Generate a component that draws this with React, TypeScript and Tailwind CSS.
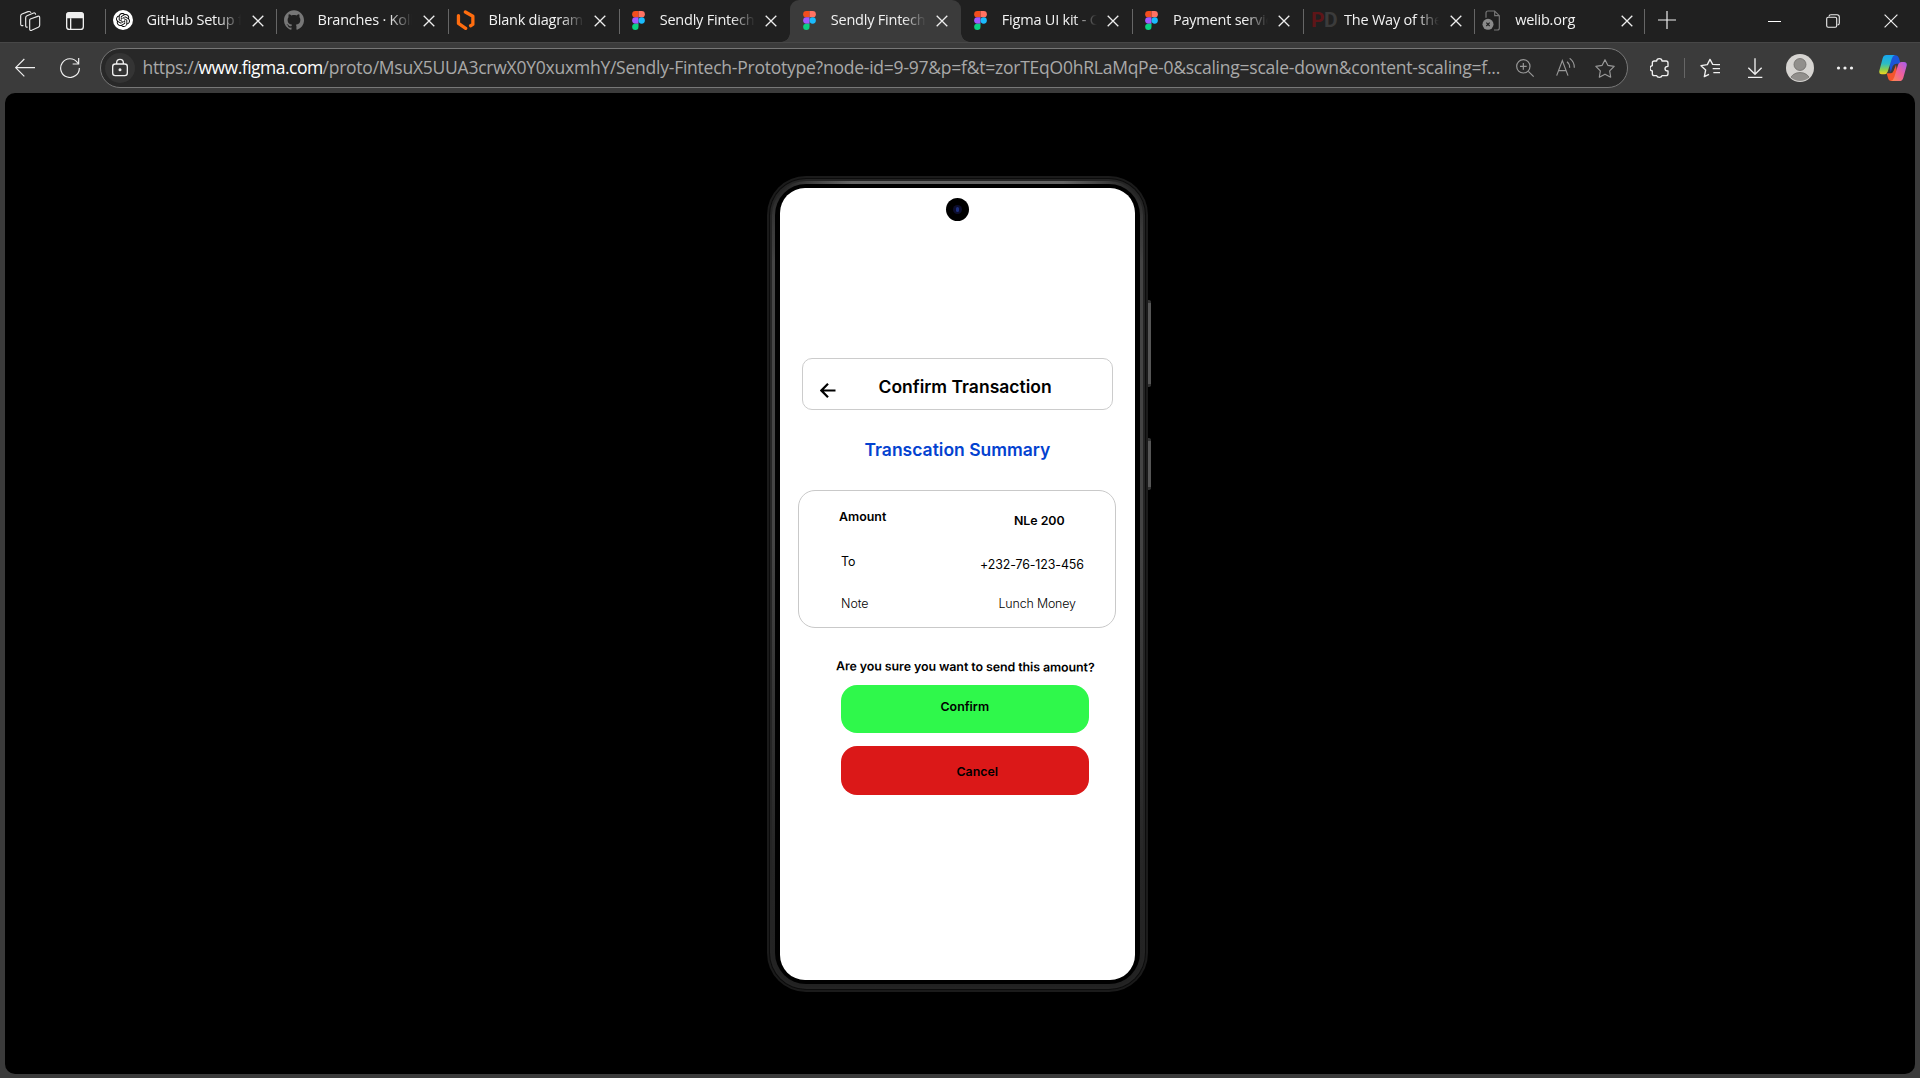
import type { ReactNode } from "react";
import { SiOpenai, SiGithub } from "react-icons/si";

const FigmaIcon = () => (
  <svg className="h-[19px] w-[13px]" viewBox="0 0 38 57">
    <path fill="#f24e1e" d="M19 0H9.5a9.5 9.5 0 0 0 0 19H19z" />
    <path fill="#ff7262" d="M19 0h9.500a9.500 9.500 0 0 1 0 19H19z" />
    <path fill="#a259ff" d="M19 19H9.500a9.500 9.500 0 0 0 0 19H19z" />
    <circle fill="#1abcfe" cx="28.500" cy="28.500" r="9.500" />
    <path fill="#0acf83" d="M19 38H9.500a9.500 9.500 0 1 0 9.500 9.500z" />
  </svg>
);

const ChatIcon = () => (
  <span className="flex size-5 items-center justify-center rounded-full bg-white">
    <SiOpenai className="size-[14px] text-black" />
  </span>
);

const LucidIcon = () => (
  <svg className="h-5 w-[19px]" viewBox="49 29 57 61" fill="none" stroke="#ff6d0f" strokeWidth="10" strokeLinejoin="round" strokeLinecap="round">
    <path d="M56 46v24l22 15" />
    <path d="M77 35l23 13v25l-7 4" />
  </svg>
);

const BrokenPageIcon = () => (
  <svg className="h-[21px] w-[19px]" viewBox="188 29 57 63" fill="none">
    <path d="M200 52V38q0-6 6-6h20l14 14v37q0 6-6 6h-10M226 32v14h14" stroke="#777" strokeWidth="3.500" />
    <circle cx="206" cy="72" r="16.500" fill="#8a8a8a" />
    <path d="M201 67l10 10M211 67l-10 10" stroke="#202020" strokeWidth="3.500" />
  </svg>
);

const PdIcon = () => (
  <span className="block text-[21px] leading-5 font-bold tracking-[-0.500px] font-['Roboto',sans-serif]">
    <span className="text-[#5e1518]">P</span>
    <span className="text-[#3b3b3b]">D</span>
  </span>
);

type TabInfo = { icon: ReactNode; title: string; active?: boolean; line?: boolean };

const tabs: TabInfo[] = [
  { icon: <ChatIcon />, title: "GitHub Setup f", line: true },
  { icon: <SiGithub className="size-5 text-[#777]" />, title: "Branches · Koll", line: true },
  { icon: <LucidIcon />, title: "Blank diagram:", line: true },
  { icon: <FigmaIcon />, title: "Sendly Fintech", line: true },
  { icon: <FigmaIcon />, title: "Sendly Fintech", active: true },
  { icon: <FigmaIcon />, title: "Figma UI kit - C" },
  { icon: <FigmaIcon />, title: "Payment servic", line: true },
  { icon: <PdIcon />, title: "The Way of the", line: true },
  { icon: <BrokenPageIcon />, title: "welib.org", line: true },
];

const Cross = () => (
  <svg className="size-[12px]" viewBox="0 0 12 12" stroke="#eee" strokeWidth="1.300">
    <path d="M.7.7l10.600 10.600M11.300.7L.7 11.300" />
  </svg>
);

function Tab({ icon, title, active, line }: TabInfo) {
  return (
    <div
      className={
        "relative flex h-[42px] w-[171.100px] shrink-0 items-center " + (active ? "rounded-t-[9px] bg-[#3b3b3b]" : "")
      }
    >
      {line && <span className="absolute top-[9px] left-0 h-[25px] w-px bg-[#666]" />}
      {active && (
        <>
          <span className="absolute bottom-0 -left-[9px] size-[9px] bg-[radial-gradient(circle_at_0_0,transparent_8.500px,#3b3b3b_9px)]" />
          <span className="absolute -right-[9px] bottom-0 size-[9px] bg-[radial-gradient(circle_at_100%_0,transparent_8.500px,#3b3b3b_9px)]" />
        </>
      )}
      <span className="ml-2 flex w-[21px] justify-start pb-[2px] empty:hidden">
        <span className={title.includes("Fintech") || title.includes("Figma") || title.includes("Payment") ? "pl-[5px]" : ""}>{icon}</span>
      </span>
      <span className="ml-3 w-[97px] overflow-hidden pb-[3px] text-[14.500px] tracking-[-0.220px] whitespace-nowrap text-[#f2f2f2] [mask-image:linear-gradient(to_right,black_74%,transparent_98%)]">
        {title}
      </span>
      <span className="ml-[8.500px] pb-[1px]">
        <Cross />
      </span>
    </div>
  );
}

function TabStrip() {
  return (
    <header className="flex h-[42px] items-center bg-[#202020]">
      <svg className="ml-[19px] h-[22px] w-[22px]" viewBox="57 27 66 66" fill="none" stroke="#e8e8e8" strokeWidth="3.500" strokeLinejoin="round">
        <path d="M91 52l22-8q6-2 6 4v23q0 4-4 6l-20 9q-6 2-6-4V57q0-4 2-5z" transform="translate(0 2)" />
        <path d="M83 78q-6 2-6-4V50q0-4 4-6l20-8q5-2 6 5" />
        <path d="M70 73q-8 3-8-4V45q0-4 4-6l18-7q7-2 9 3" />
      </svg>
      <svg className="ml-[24px] size-[20px]" viewBox="195 30 60 60" fill="none">
        <rect x="200" y="35" width="50" height="50" rx="8" stroke="#eee" strokeWidth="4" />
        <path d="M199 52V42q0-8 8-8h36q8 0 8 8v10z" fill="#eee" />
        <path d="M212 52v32" stroke="#eee" strokeWidth="4" />
      </svg>
      <nav className="ml-[20.400px] flex">
        {tabs.map((t, i) => (
          <Tab key={i} {...t} />
        ))}
      </nav>
      <div className="-ml-px flex h-[25px] w-px bg-[#666]" />
      <svg className="ml-[13px] size-[18px] -translate-y-[1px]" viewBox="0 0 18 18" stroke="#eee" strokeWidth="1.200">
        <path d="M9 0v18M0 9h18" />
      </svg>
      <div className="mr-[22px] ml-auto flex items-center">
        <div className="h-px w-[13px] bg-white" />
        <svg className="ml-[45px] size-[14px]" viewBox="0 0 14 14" fill="none" stroke="#eee" strokeWidth="1.100">
          <rect x=".7" y="3.200" width="10" height="10" rx="1.500" />
          <path d="M3 2.500Q3 .7 5 .7h6q2.300 0 2.300 2.300v6q0 2-1.800 2" />
        </svg>
        <svg className="ml-[44px] size-[14px]" viewBox="0 0 14 14" stroke="#eee" strokeWidth="1.200">
          <path d="M.6.6l12.800 12.800M13.400.6L.6 13.400" />
        </svg>
      </div>
    </header>
  );
}

const star = "M555 179l8.500 17 19 3-13.500 13.500 3 19-17-9-17 9 3-19L527.500 199l19-3z";

function Toolbar() {
  return (
    <div className="flex h-[51px] items-center border-t border-[#474747] bg-[#3b3b3b]">
      <svg className="ml-[15px] size-5" viewBox="45 174 60 60" fill="none" stroke="#f0f0f0" strokeWidth="3.500">
        <path d="M105 203H48M73 177l-26 26 26 26" />
      </svg>
      <svg className="ml-[25px] size-5" viewBox="180 174 60 60" fill="none" stroke="#f0f0f0" strokeWidth="3.500">
        <path d="M238 204a28 28 0 1 1-6-17l4 4M236 174v18h-18" />
      </svg>
      <div className="ml-5 flex h-[40px] w-[1528px] items-center rounded-full border border-[#777] bg-[#282828]">
        <span className="ml-1 flex size-[30px] items-center justify-center rounded-full bg-[#343434]">
          <svg className="size-5" viewBox="330 174 60 60" fill="none" stroke="#f0f0f0" strokeWidth="4">
            <rect x="338" y="192" width="44" height="35" rx="8" />
            <path d="M350 192v-4q0-10 10-10t10 10v4" />
            <circle cx="360" cy="209" r="2.500" fill="#f0f0f0" />
          </svg>
        </span>
        <span className="ml-[7.500px] flex w-[1362px] pb-px text-[17.500px] whitespace-nowrap text-[#a9a9a9]">
          <span className="w-[56px] tracking-[-0.350px]">https://</span>
          <span className="w-[124px] tracking-[-0.500px] text-white">www.figma.com</span>
          <span className="tracking-[-0.236px]">
            /proto/MsuX5UUA3crwX0Y0xuxmhY/Sendly-Fintech-Prototype?node-id=9-97&amp;p=f&amp;t=zorTEqO0hRLaMqPe-0&amp;scaling=scale-down&amp;content-scaling=f...
          </span>
        </span>
        <div className="mr-3 ml-auto flex gap-5">
          <svg className="size-5" viewBox="285 174 60 60" fill="none" stroke="#999" strokeWidth="3.500">
            <circle cx="310" cy="199" r="20" />
            <path d="M325 214l16 16M310 189v20M300 199h20" />
          </svg>
          <svg className="size-5" viewBox="405 174 60 60" fill="none" stroke="#999" strokeWidth="3.500">
            <path d="M410 227l17-45 17 45M416 212h22M441 185q8 6 8 18M449 175q14 10 14 28" />
          </svg>
          <svg className="size-5" viewBox="525 174 60 60" fill="none" stroke="#999" strokeWidth="3.500" strokeLinejoin="round">
            <path d={star} />
          </svg>
        </div>
      </div>
      <svg className="ml-[22px] size-5" viewBox="690 174 60 60" fill="none" stroke="#f0f0f0" strokeWidth="4" strokeLinejoin="round">
        <path d="M703 183h7q0-7 8-7t8 7h12q6 0 6 6v10q-9 0-9 7t9 7v8q0 6-6 6h-12q-1 5-8 5t-8-5h-7q-6 0-6-6v-8q-7-1-7-8t7-8v-8q0-6 6-6z" />
      </svg>
      <div className="ml-[14px] h-5 w-px bg-[#666]" />
      <svg className="ml-[15px] size-5" viewBox="840 174 60 60" fill="none" stroke="#f0f0f0" strokeWidth="4" strokeLinejoin="round">
        <path d="M891 194l-13-1-8-15-8 16-19 3 14 13-4 20 14-7M878 194h23M878 206h23M880 218h21" />
      </svg>
      <svg className="ml-[25px] size-5" viewBox="975 174 60 60" fill="none" stroke="#f0f0f0" strokeWidth="4">
        <path d="M1005 175v46M985 203l20 20 20-20M984 232h43" />
      </svg>
      <svg className="ml-[21px] size-7" viewBox="0 0 28 28">
        <defs>
          <clipPath id="avatar">
            <circle cx="14" cy="14" r="13" />
          </clipPath>
        </defs>
        <circle cx="14" cy="14" r="14" fill="#d6d4d1" />
        <g clipPath="url(#avatar)" fill="#918f8c" stroke="#6f6d6b" strokeWidth=".8">
          <circle cx="14" cy="10.500" r="6" />
          <ellipse cx="14" cy="25.500" rx="9.500" ry="7" />
        </g>
      </svg>
      <svg className="ml-[21px] h-5 w-5" viewBox="0 0 20 20" fill="#f0f0f0">
        <circle cx="3.500" cy="10" r="1.600" />
        <circle cx="10" cy="10" r="1.600" />
        <circle cx="16.500" cy="10" r="1.600" />
      </svg>
      <svg className="ml-[24px] size-7" viewBox="1377 162 84 84">
        <defs>
          <linearGradient id="cl" x1="0" y1="0" x2="0" y2="1">
            <stop offset="0" stopColor="#17a5f0" />
            <stop offset=".45" stopColor="#2bbcc4" />
            <stop offset=".75" stopColor="#8ccf4c" />
            <stop offset="1" stopColor="#f5d51e" />
          </linearGradient>
          <linearGradient id="cr" x1="1" y1="0" x2="0" y2="1">
            <stop offset="0" stopColor="#a45cf0" />
            <stop offset=".5" stopColor="#f0609a" />
            <stop offset="1" stopColor="#ff8a4a" />
          </linearGradient>
        </defs>
        <path fill="#1b55d8" d="M1404 166h22q8 0 11 9l5 16h-13q-8 0-11 8l-6 18z" />
        <path fill="#f4552c" d="M1434 243h-20q-8 0-10-9l-4-14h11q7 0 10-8l7-18z" />
        <path fill="url(#cl)" d="M1399 165h26q-7 2-10 12l-12 38q-3 8-10 8h-8q-9 0-7-11l10-37q3-10 11-10z" />
        <path fill="url(#cr)" d="M1439 243h-26q7-2 10-12l11-36q3-9 11-9h7q10 0 8 11l-10 36q-3 10-11 10z" />
      </svg>
    </div>
  );
}

function Phone() {
  return (
    <div className="relative mt-[83px] ml-[762px] h-[816px] w-[381px] rounded-[39px] bg-[#1b1b1b] p-[2px]">
      <div className="absolute top-[124px] -right-[3px] h-[87px] w-[3px] rounded-r-[2px] border-y-[3px] border-[#333] bg-[#565656]" />
      <div className="absolute top-[262px] -right-[3px] h-[52px] w-[3px] rounded-r-[2px] border-y-[3px] border-[#333] bg-[#565656]" />
      <div className="h-full rounded-[37px] bg-[#0c0c0c] p-px">
        <div className="h-full rounded-[36px] bg-[#242424] p-[2px]">
          <div className="h-full rounded-[34px] bg-[radial-gradient(circle_at_0_0,#282828_15px,transparent_80px),radial-gradient(circle_at_100%_0,#282828_15px,transparent_80px),linear-gradient(to_bottom,#666,#444_8%,#444_45%,#262626_85%,#222)] p-[3px]">
            <div className="h-full rounded-[31px] bg-black py-[4px] pr-[5px] pl-[5px]">
              <Screen />
            </div>
          </div>
        </div>
      </div>
    </div>
  );
}

function Screen() {
  return (
    <main className="flex h-full flex-col rounded-[25px] bg-white font-['Inter',sans-serif] text-[12.400px] leading-4 text-black">
      <div className="mt-[10px] ml-[166px] flex size-[23px] shrink-0 items-center justify-center rounded-full bg-black">
        <div className="flex size-[9px] items-center justify-center rounded-full bg-[#0c0d2c]">
          <div className="h-[5px] w-[3px] rounded-full bg-[#1d2f7c]" />
        </div>
      </div>
      <div className="mt-[137px] ml-[22px] flex h-[52px] w-[310.500px] shrink-0 rounded-[10px] border border-[#ccc]">
        <svg className="mt-[23.500px] ml-[17px] h-[15px] w-[16px]" viewBox="0 0 16 15" fill="none" stroke="#000" strokeWidth="2.200">
          <path d="M15.500 7.500H1.500M8 .8L1.400 7.500 8 14.200" />
        </svg>
        <h1 className="mt-[18px] ml-[42.500px] text-[17.500px] leading-5 font-semibold whitespace-nowrap">Confirm Transaction</h1>
      </div>
      <h2 className="mt-[30px] ml-[84.500px] text-[17.500px] leading-5 font-semibold whitespace-nowrap text-[#0342d0]">Transcation Summary</h2>
      <section className="mt-[30px] ml-[18px] flex h-[138px] w-[318px] shrink-0 rounded-[17px] border border-[#c9c9c9] whitespace-nowrap">
        <div className="ml-[42px] w-[139px] pt-[18px]">
          <p className="-ml-[2px] font-semibold">Amount</p>
          <p className="mt-[29px]">To</p>
          <p className="mt-[26px] font-light">Note</p>
        </div>
        <div className="pt-[22px]">
          <p className="ml-[34px] font-semibold tracking-[-0.050px]">NLe 200</p>
          <p className="mt-[28px] tracking-[-0.100px]">+232-76-123-456</p>
          <p className="mt-[23px] ml-[18.500px] tracking-[-0.150px] font-light">Lunch Money</p>
        </div>
      </section>
      <p className="mt-[31px] ml-[56px] w-[258px] rotate-[0.300deg] font-semibold tracking-[-0.070px] whitespace-nowrap">Are you sure you want to send this amount?</p>
      <button className="mt-[10px] ml-[60.500px] h-12 w-[248.500px] shrink-0 rounded-[16px] bg-[#2ff84b] pb-[5px] text-center font-semibold">Confirm</button>
      <button className="mt-[13px] ml-[60.500px] h-[49px] w-[248.500px] shrink-0 rounded-[16px] bg-[#db1818] pt-[2px] pl-[25px] text-center font-semibold">Cancel</button>
    </main>
  );
}

export default function App() {
  return (
    <div className="flex h-[1078px] w-[1920px] flex-col overflow-hidden bg-[#3b3b3b] font-['Open_Sans',sans-serif]">
      <TabStrip />
      <Toolbar />
      <div className="mx-[5px] h-[981px] overflow-hidden rounded-[10px] bg-black">
        <Phone />
      </div>
    </div>
  );
}
